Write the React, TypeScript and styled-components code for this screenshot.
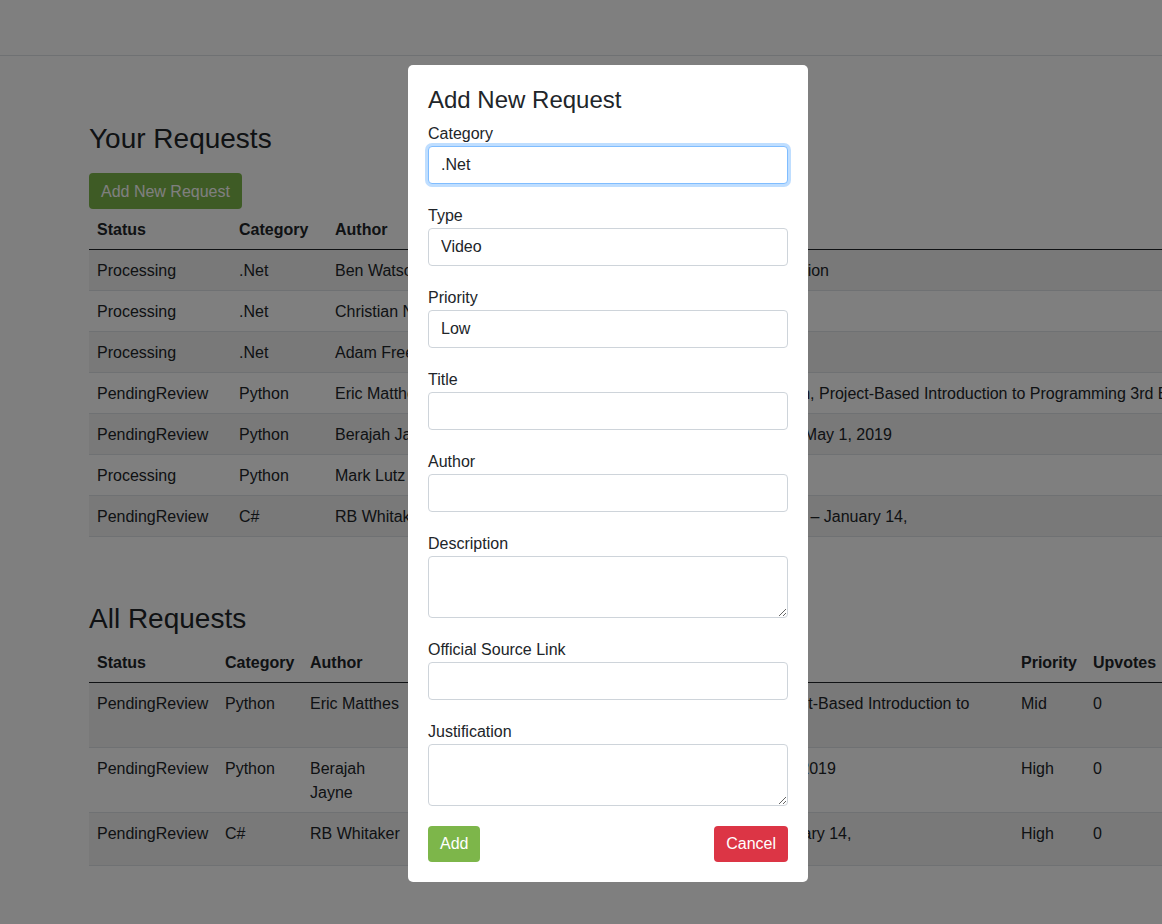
import React from "react";
import styled, { createGlobalStyle } from "styled-components";

type Request = {
    status: string
    category: string
    author: string
    title: string
    type: string
    priority: string
    upvotes: number
}

const yourRequests: Request[] = [
    { status: 'Processing', category: '.Net', author: 'Ben Watson', title: 'Writing High-Performance .NET Code, 2nd Edition', type: 'Book', priority: 'Mid', upvotes: 0 },
    { status: 'Processing', category: '.Net', author: 'Christian Nagel', title: 'Professional C# 7 and .NET Core 2.0', type: 'Book', priority: 'Low', upvotes: 0 },
    { status: 'Processing', category: '.Net', author: 'Adam Freeman', title: 'Pro ASP.NET Core MVC 2', type: 'Book', priority: 'Mid', upvotes: 0 },
    { status: 'PendingReview', category: 'Python', author: 'Eric Matthes', title: 'Python Crash Course, 2nd Edition: A Hands-On, Project-Based Introduction to Programming 3rd Edition', type: 'Book', priority: 'Mid', upvotes: 0 },
    { status: 'PendingReview', category: 'Python', author: 'Berajah Jayne', title: 'Python Programming: A Step-by-Step Guide – May 1, 2019', type: 'Book', priority: 'High', upvotes: 0 },
    { status: 'Processing', category: 'Python', author: 'Mark Lutz', title: 'Learning Python, 5th Edition', type: 'Book', priority: 'Low', upvotes: 0 },
    { status: 'PendingReview', category: 'C#', author: 'RB Whitaker', title: "The C# Player's Guide (3rd Edition) Paperback – January 14,", type: 'Book', priority: 'High', upvotes: 0 },
]

const allRequests: Request[] = [
    { status: 'PendingReview', category: 'Python', author: 'Eric Matthes', title: 'Python Crash Course, 2nd Edition: A Hands-On, Project-Based Introduction to Programming 3rd Edition', type: 'Book', priority: 'Mid', upvotes: 0 },
    { status: 'PendingReview', category: 'Python', author: 'Berajah Jayne', title: 'Python Programming: A Step-by-Step Guide – May 1, 2019', type: 'Book', priority: 'High', upvotes: 0 },
    { status: 'PendingReview', category: 'C#', author: 'RB Whitaker', title: "The C# Player's Guide (3rd Edition) Paperback – January 14,", type: 'Book', priority: 'High', upvotes: 0 },
]

const GlobalStyle = createGlobalStyle`
  body {
    margin: 0;
    overflow: hidden;
    background: #fff;
    color: #212529;
    font-family: "Liberation Sans", Arial, sans-serif;
    font-size: 16px;
    line-height: 24px;
  }
  * {
    box-sizing: border-box;
  }
`

const Navbar = styled.header`
  height: 56px;
  border-bottom: 1px solid #dee2e6;
  background: #fff;
`

const Main = styled.main`
  padding: 66px 0 0 89px;
`

const Section = styled.section<{ $gap?: number }>`
  margin-top: ${props => props.$gap || 0}px;
`

const Heading = styled.h3<{ $space: number }>`
  margin: 0 0 ${props => props.$space}px;
  font-size: 28px;
  font-weight: 400;
  line-height: 34px;
`

const Button = styled.button<{ $variant?: 'success' | 'danger' }>`
  height: 36px;
  padding: 1px 11px 0;
  border: 1px solid transparent;
  border-radius: 4px;
  background: ${props => props.$variant === 'danger' ? '#dc3545' : '#7db64a'};
  color: #fff;
  font-family: inherit;
  font-size: 16px;
  line-height: 22px;
  cursor: pointer;
`

const ModalButton = styled(Button)`
  padding-top: 0;
`

const Table = styled.table<{ $nowrap?: boolean }>`
  border-collapse: collapse;
  table-layout: fixed;
  white-space: ${props => props.$nowrap ? 'nowrap' : 'normal'};

  th, td {
    padding: 9px 8px 7px;
    text-align: left;
    vertical-align: top;
  }

  th {
    font-weight: 700;
    border-bottom: 1px solid #212529;
  }

  tbody tr {
    border-bottom: 1px solid #dee2e6;
  }

  tbody tr:nth-child(odd) {
    background: rgba(0, 0, 0, .05);
  }
`

const Overlay = styled.div`
  position: fixed;
  inset: 0;
  background: rgba(0, 0, 0, .5);
`

const Modal = styled.form`
  position: fixed;
  top: 65px;
  left: 408px;
  width: 400px;
  padding: 20px;
  border-radius: 5px;
  background: #fff;
`

const ModalTitle = styled.h4`
  margin: 0 0 7px;
  padding-top: 1px;
  font-size: 24px;
  font-weight: 400;
  line-height: 28px;
`

const Field = styled.div`
  margin-bottom: 19px;
`

const Label = styled.label`
  display: block;
  margin-bottom: 1px;
  padding-top: 1px;
  line-height: 23px;
`

const Input = styled.input<{ $focused?: boolean }>`
  display: block;
  width: 100%;
  height: 38px;
  padding: 6px 12px;
  border: 1px solid ${props => props.$focused ? '#80bdff' : '#ced4da'};
  border-radius: 4px;
  box-shadow: ${props => props.$focused ? '0 0 0 3px rgba(0, 123, 255, .25)' : 'none'};
  color: #212529;
  font-family: inherit;
  font-size: 16px;
  line-height: 24px;
  outline: none;
`

const TextArea = styled.textarea`
  display: block;
  width: 100%;
  height: 62px;
  padding: 6px 12px;
  border: 1px solid #ced4da;
  border-radius: 4px;
  color: #212529;
  font-family: inherit;
  font-size: 16px;
  line-height: 24px;
  resize: vertical;
  outline: none;
`

const Footer = styled.div`
  display: flex;
  justify-content: space-between;
  padding-top: 1px;
`

const RequestTable = (props: { rows: Request[], widths: number[], nowrap?: boolean, actions?: boolean }) => {
    const headers = ['Status', 'Category', 'Author', 'Title', 'Priority', 'Upvotes']
    return (
        <Table $nowrap={props.nowrap} style={{ width: props.widths.reduce((a, b) => a + b, 0) }}>
            <colgroup>
                {props.widths.map((w, i) => <col key={i} style={{ width: w }}/>)}
            </colgroup>
            <thead>
                <tr>
                    {headers.map(h => <th key={h}>{h}</th>)}
                    {props.actions && <th/>}
                </tr>
            </thead>
            <tbody>
                {props.rows.map((r, i) => (
                    <tr key={i}>
                        <td>{r.status}</td>
                        <td>{r.category}</td>
                        <td>{r.author}</td>
                        <td>{r.title}</td>
                        <td>{r.priority}</td>
                        <td>{r.upvotes}</td>
                        {props.actions && <td><Button type={'button'}>Upvote</Button></td>}
                    </tr>
                ))}
            </tbody>
        </Table>
    )
}

const fields = [
    { label: 'Category', value: '.Net', focused: true },
    { label: 'Type', value: 'Video' },
    { label: 'Priority', value: 'Low' },
    { label: 'Title', value: '' },
    { label: 'Author', value: '' },
]

export default function App() {
    return (
        <>
            <GlobalStyle/>
            <Navbar/>
            <Main>
                <Section>
                    <Heading $space={17}>Your Requests</Heading>
                    <Button type={'button'}>Add New Request</Button>
                    <RequestTable rows={yourRequests} widths={[142, 96, 138, 720, 90, 90]} nowrap/>
                </Section>
                <Section $gap={65}>
                    <Heading $space={6}>All Requests</Heading>
                    <RequestTable rows={allRequests} widths={[128, 85, 107, 604, 72, 80, 110]} actions/>
                </Section>
            </Main>
            <Overlay/>
            <Modal onSubmit={e => e.preventDefault()}>
                <ModalTitle>Add New Request</ModalTitle>
                {fields.map(f => (
                    <Field key={f.label}>
                        <Label>{f.label}</Label>
                        <Input $focused={f.focused} defaultValue={f.value}/>
                    </Field>
                ))}
                <Field>
                    <Label>Description</Label>
                    <TextArea rows={2}/>
                </Field>
                <Field>
                    <Label>Official Source Link</Label>
                    <Input/>
                </Field>
                <Field>
                    <Label>Justification</Label>
                    <TextArea rows={2}/>
                </Field>
                <Footer>
                    <ModalButton type={'submit'}>Add</ModalButton>
                    <ModalButton type={'button'} $variant={'danger'}>Cancel</ModalButton>
                </Footer>
            </Modal>
        </>
    )
}
